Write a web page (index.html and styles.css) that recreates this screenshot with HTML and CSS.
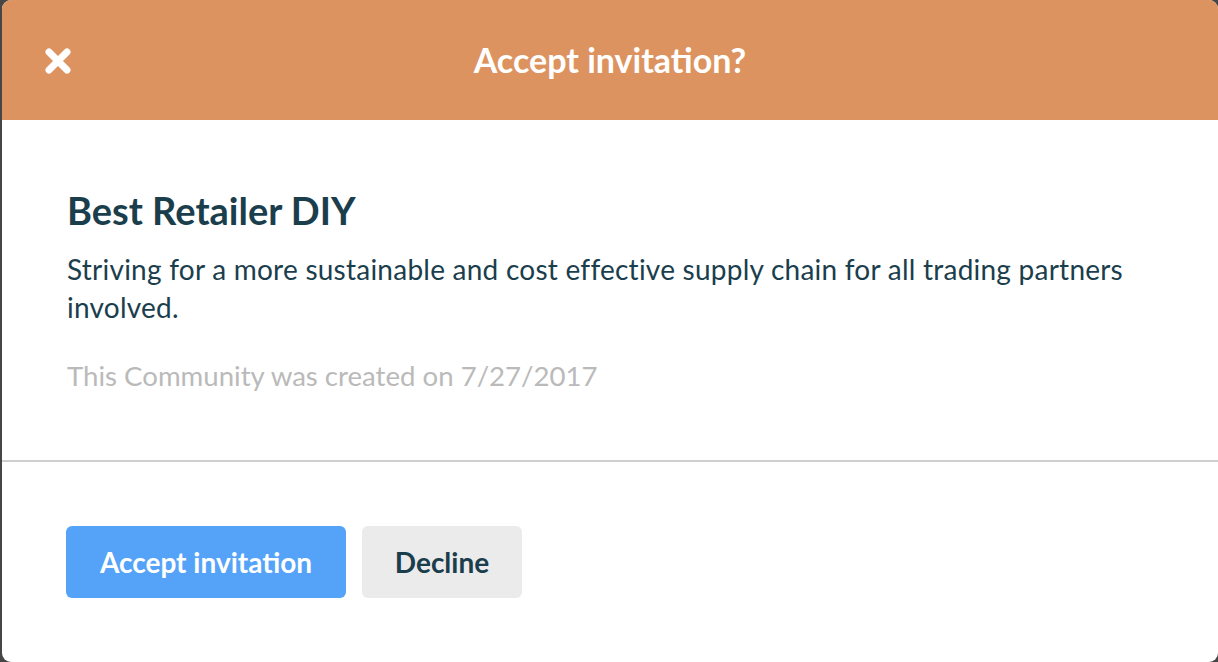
FILE: index.html
```html
<html>
<head>
    <title>Accept invitation?</title>
    <link rel="stylesheet" href="styles.css">
</head>
<body>
    <div class="modal">
        <div class="modal-header">
            <button class="close" aria-label="Close">
                <svg width="28" height="28" viewBox="0 0 28 28">
                    <path d="M5 5 L23 23 M23 5 L5 23" stroke="#fff" stroke-width="7" stroke-linecap="round" fill="none"/>
                </svg>
            </button>
            <h2>Accept invitation?</h2>
        </div>

        <div class="modal-body">
            <h3>Best Retailer DIY</h3>
            <p class="description">Striving for a more sustainable and cost effective supply chain for all trading partners involved.</p>
            <p class="meta">This Community was created on 7/27/2017</p>
        </div>

        <div class="modal-footer">
            <button class="btn btn-primary">Accept invitation</button>
            <button class="btn btn-default">Decline</button>
        </div>
    </div>
</body>
</html>
```

FILE: styles.css
```css
body {
    margin: 0;
    padding: 0;
    background-color: #464646;
    font-family: Lato, "Open Sans", sans-serif;
    color: #1b3e4d;
}

.modal {
    margin-left: 2px;
    height: 662px;
    background-color: #fff;
    border-radius: 9px;
    overflow: hidden;
    display: flex;
    flex-direction: column;
}

.modal-header {
    height: 120px;
    background-color: #dd935f;
    display: flex;
    align-items: center;
    justify-content: center;
    position: relative;
}

.modal-header h2 {
    margin: 0;
    color: #fff;
    font-size: 34px;
    font-weight: 700;
    line-height: 38px;
}

.close {
    position: absolute;
    left: 42px;
    top: 47px;
    width: 28px;
    height: 28px;
    padding: 0;
    border: none;
    background: none;
    cursor: pointer;
}

.modal-body {
    padding: 68px 60px 0 65px;
    height: 272px;
    border-bottom: 2px solid #cfcfcf;
}

.modal-body h3 {
    margin: 0 0 18px;
    font-size: 38px;
    font-weight: 700;
    line-height: 44px;
}

.description {
    margin: 0;
    font-size: 28px;
    line-height: 38px;
    letter-spacing: 0.24px;
}

.meta {
    margin: 31px 0 0;
    font-size: 27.6px;
    line-height: 38px;
    color: #bababa;
}

.modal-footer {
    padding: 64px 64px;
    display: flex;
    gap: 16px;
}

.btn {
    height: 72px;
    padding: 0 20px;
    border: none;
    border-radius: 6px;
    font-family: inherit;
    font-size: 28px;
    font-weight: 700;
    cursor: pointer;
}

.btn-primary {
    width: 280px;
    background-color: #55a3f8;
    color: #fff;
}

.btn-default {
    width: 160px;
    background-color: #ebebeb;
    color: #1b3e4d;
}
```
